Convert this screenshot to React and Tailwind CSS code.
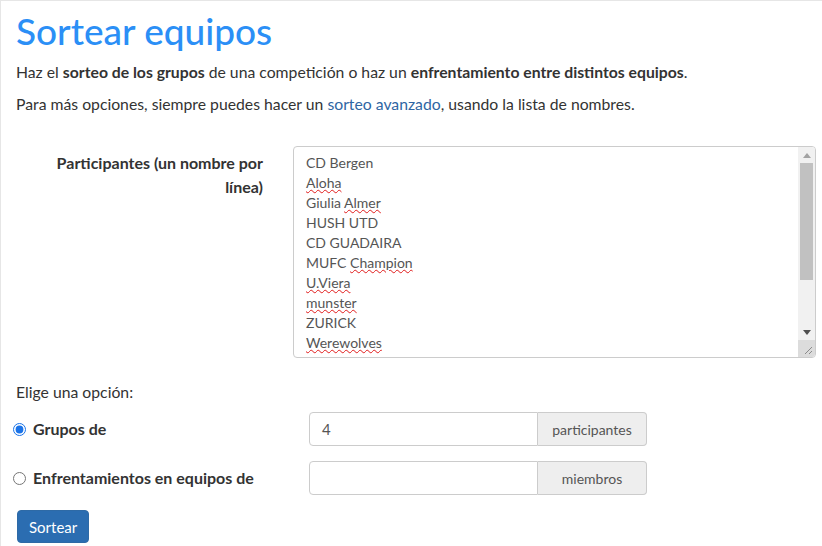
import React from "react";

const lines = [
  [{ t: "CD Bergen" }],
  [{ t: "Aloha", e: true }],
  [{ t: "Giulia " }, { t: "Almer", e: true }],
  [{ t: "HUSH UTD" }],
  [{ t: "CD GUADAIRA" }],
  [{ t: "MUFC " }, { t: "Champion", e: true }],
  [{ t: "U.Viera", e: true }],
  [{ t: "munster", e: true }],
  [{ t: "ZURICK" }],
  [{ t: "Werewolves", e: true }],
  [{ t: "Manchester", e: true }],
];

function FakeTextarea() {
  return (
    <div className="relative flex w-[523px] h-[212px] border border-[#cccccc] rounded-[4px] bg-white overflow-hidden">
      <div className="flex-1 pl-[12px] pt-[6px] text-[14px] leading-[20px] text-[#555555] overflow-hidden">
        {lines.map((parts, i) => (
          <div key={i} className="whitespace-nowrap">
            {parts.map((p, j) =>
              p.e ? (
                <span key={j} className="underline decoration-wavy decoration-[#e01b1b] decoration-1 underline-offset-[1px]">
                  {p.t}
                </span>
              ) : (
                <span key={j}>{p.t}</span>
              )
            )}
          </div>
        ))}
      </div>
      <div className="w-[17px] flex flex-col bg-[#f1f1f1]">
        <div className="h-[16px] flex items-center justify-center">
          <svg width="8" height="5" viewBox="0 0 8 5"><path d="M4 0 L8 5 L0 5 Z" fill="#a3a3a3" /></svg>
        </div>
        <div className="h-[117px] mx-[2px] bg-[#c1c1c1]" />
        <div className="flex-1" />
        <div className="h-[16px] flex items-center justify-center">
          <svg width="8" height="5" viewBox="0 0 8 5"><path d="M0 0 L8 0 L4 5 Z" fill="#505050" /></svg>
        </div>
        <div className="h-[17px] bg-[#dcdcdc] flex items-end justify-end pr-[2px] pb-[2px]">
          <svg width="10" height="10" viewBox="0 0 10 10">
            <path d="M9 2 L2 9 M9 6 L6 9" stroke="#8a8a8a" strokeWidth="1" />
          </svg>
        </div>
      </div>
    </div>
  );
}

function OptionRow({ checked, label, value, addon }) {
  return (
    <div className="flex items-center h-[34px]">
      <label className="flex items-center w-[296px] ml-[-3px]">
        <input
          type="radio"
          name="opt"
          defaultChecked={checked}
          className="w-[13px] h-[13px] m-0 accent-[#1a73e8]"
        />
        <span className="ml-[7px] font-bold text-[16px]">{label}</span>
      </label>
      <div className="flex h-[34px] w-[338px]">
        <div className="w-[229px] h-full border border-[#cccccc] rounded-l-[4px] bg-white pl-[12px] flex items-center text-[15px] text-[#555555]">
          {value}
        </div>
        <div className="flex-1 h-full border border-l-0 border-[#cccccc] rounded-r-[4px] bg-[#eeeeee] flex items-center justify-center text-[14px] text-[#555555]">
          {addon}
        </div>
      </div>
    </div>
  );
}

export default function App() {
  return (
    <div className="w-[822px] h-[546px] overflow-hidden bg-white border-t border-l border-[#e6e6e6] text-[#333333] font-['Lato',sans-serif]">
      <div className="pl-[15px] pt-[10px]">
        <h1 className="text-[37px] leading-[40px] font-medium text-[#2b8ff6]">Sortear equipos</h1>
        <p className="mt-[10px] text-[15.75px] leading-[22px]">
          Haz el <b>sorteo de los grupos</b> de una competición o haz un{" "}
          <b>enfrentamiento entre distintos equipos</b>.
        </p>
        <p className="mt-[10px] text-[15.75px] leading-[22px]">
          Para más opciones, siempre puedes hacer un{" "}
          <span className="text-[#2f66a3]">sorteo avanzado</span>, usando la lista de nombres.
        </p>
        <div className="mt-[31px] flex">
          <div className="w-[247px] text-right font-bold text-[16px] leading-[24px] pt-[5px]">
            Participantes (un nombre por
            <br />
            línea)
          </div>
          <div className="ml-[30px]">
            <FakeTextarea />
          </div>
        </div>
        <p className="mt-[22px] text-[15.75px] leading-[24px]">Elige una opción:</p>
        <div className="mt-[8px] flex flex-col gap-[15px]">
          <OptionRow checked label="Grupos de" value="4" addon="participantes" />
          <OptionRow label="Enfrentamientos en equipos de" value="" addon="miembros" />
        </div>
        <button className="mt-[15px] ml-[1px] h-[33px] px-[11px] bg-[#2b6db1] border border-[#2e6aa6] rounded-[4px] text-white text-[15px] leading-[20px]">
          Sortear
        </button>
      </div>
    </div>
  );
}
